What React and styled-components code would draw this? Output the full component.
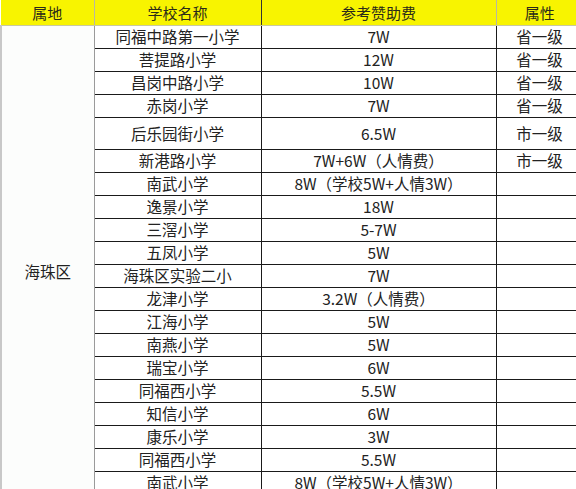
import React from "react";
import styled, { createGlobalStyle } from "styled-components";

const GlobalStyle = createGlobalStyle`
	html, body {
		margin: 0;
		padding: 0;
		background: #ffffff;
		overflow: hidden;
	}
`;

const Page = styled.div`
	width: 576px;
	height: 489px;
	overflow: hidden;
	background: #ffffff;
`;

const Table = styled.table`
	width: 582px;
	table-layout: fixed;
	border-collapse: collapse;
	font-family: "Noto Sans CJK SC", "Noto Sans", sans-serif;
	color: #222222;
	font-size: 15.5px;
`;

const HeadCell = styled.th`
	height: 25px;
	padding: 0;
	background: #f8f400;
	font-weight: 400;
	font-size: 15px;
	color: #2a2a1a;
	text-align: center;
	vertical-align: middle;
	border-bottom: 1px solid #c9c9a0;
	border-left: 1px solid ${(p) => (p.$dark ? "#333" : "#b8b8a0")};
	line-height: 1;
	&:first-child {
		border-left: none;
	}
`;

const Row = styled.tr`
	height: ${(p) => (p.$tall ? 32 : 23)}px;
`;

const Cell = styled.td`
	padding: 0;
	text-align: center;
	vertical-align: middle;
	white-space: nowrap;
	line-height: 1;
	border-top: 1.5px solid #1a1a1a;
	border-bottom: 1.5px solid #1a1a1a;
	border-left: 1.5px solid ${(p) => (p.$lightLeft ? "#9a9a9a" : "#1a1a1a")};
	border-right: 1.5px solid #1a1a1a;
`;

const RegionCell = styled.td`
	padding: 22px 0 0 0;
	text-align: center;
	vertical-align: middle;
	background: #fcfdfc;
	border-left: 2px solid #c8c8c8;
	border-right: 1.5px solid #9a9a9a;
	font-size: 15.5px;
`;

const rows = [
	["同福中路第一小学", "7W", "省一级"],
	["菩提路小学", "12W", "省一级"],
	["昌岗中路小学", "10W", "省一级"],
	["赤岗小学", "7W", "省一级"],
	["后乐园街小学", "6.5W", "市一级", true],
	["新港路小学", "7W+6W（人情费）", "市一级"],
	["南武小学", "8W（学校5W+人情3W）", ""],
	["逸景小学", "18W", ""],
	["三滘小学", "5-7W", ""],
	["五凤小学", "5W", ""],
	["海珠区实验二小", "7W", ""],
	["龙津小学", "3.2W（人情费）", ""],
	["江海小学", "5W", ""],
	["南燕小学", "5W", ""],
	["瑞宝小学", "6W", ""],
	["同福西小学", "5.5W", ""],
	["知信小学", "6W", ""],
	["康乐小学", "3W", ""],
	["同福西小学", "5.5W", ""],
	["南武小学", "8W（学校5W+人情3W）", ""],
];

export default function App() {
	return (
		<Page>
			<GlobalStyle />
			<Table>
				<colgroup>
					<col style={{ width: 93 }} />
					<col style={{ width: 167 }} />
					<col style={{ width: 235 }} />
					<col style={{ width: 87 }} />
				</colgroup>
				<thead>
					<tr>
						<HeadCell>属地</HeadCell>
						<HeadCell>学校名称</HeadCell>
						<HeadCell $dark>参考赞助费</HeadCell>
						<HeadCell>属性</HeadCell>
					</tr>
				</thead>
				<tbody>
					{rows.map(([name, fee, level, tall], i) => (
						<Row key={i} $tall={tall}>
							{i === 0 && (
								<RegionCell rowSpan={rows.length}>海珠区</RegionCell>
							)}
							<Cell $lightLeft>{name}</Cell>
							<Cell>{fee}</Cell>
							<Cell>{level}</Cell>
						</Row>
					))}
				</tbody>
			</Table>
		</Page>
	);
}
